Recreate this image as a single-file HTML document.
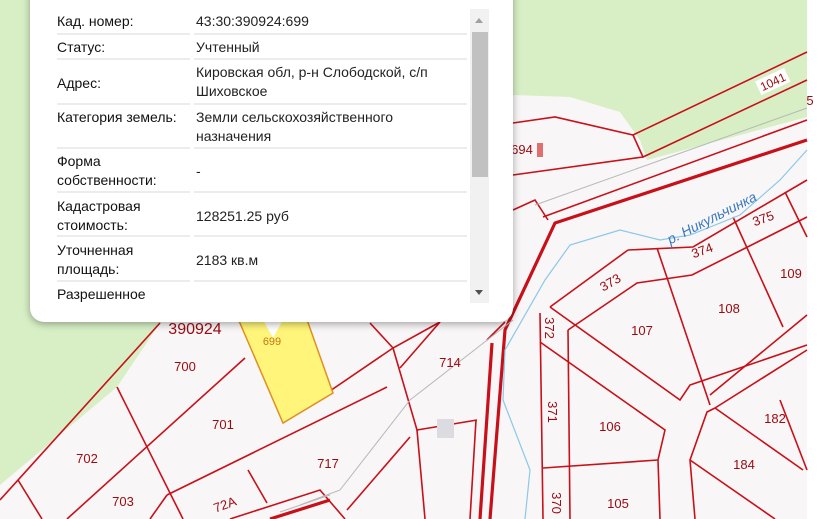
<!DOCTYPE html>
<html><head><meta charset="utf-8"><style>
body{margin:0;width:819px;height:519px;overflow:hidden;position:relative;background:#f8f6f6;font-family:"Liberation Sans",sans-serif}
svg{position:absolute;left:0;top:0}
.pop{position:absolute;left:30px;top:-20px;width:483px;height:342px;background:#fff;border-radius:14px;box-shadow:0 2px 8px rgba(0,0,0,.35)}
.tail{position:absolute;left:262px;top:318px;width:0;height:0;border-left:11px solid transparent;border-right:11px solid transparent;border-top:20px solid #fff}
.r{position:absolute;left:57px;width:410px;font-size:14px;color:#222;line-height:19px}
.l{position:absolute;left:0;width:133px;color:#111}
.v{position:absolute;left:139px;width:271px}
.sep{position:absolute;height:2px;background:#ececec}
.sb{position:absolute;left:470px;top:9px;width:19px;height:294px;background:#f1f1f1}
.th{position:absolute;left:472px;top:32px;width:16px;height:145px;background:#c1c1c1}
.ar{position:absolute;left:475px;width:0;height:0;border-left:4px solid transparent;border-right:4px solid transparent}
</style></head><body>
<svg width="819" height="519" viewBox="0 0 819 519">
<rect x="807" y="0" width="12" height="519" fill="#fff"/>
<polygon points="0,0 200,0 200,300 160,323 117,387 0,485" fill="#d8efc6"/>
<polygon points="513,0 807,0 807,117 647,160 640,140 620,112 570,97 513,95" fill="#d8efc6"/>
<g stroke="#c8101a" stroke-width="1.6" fill="none">
<polyline points="513,123 555,117 633,135 807,52"/>
<polyline points="633,135 643,157 807,80"/>
<line x1="513" y1="175" x2="643" y2="157"/>
<polyline points="548,220 535,200 513,210"/>
<polyline points="543,217 807,120"/>
<polyline points="628,250 693,247 807,180"/>
<polyline points="550,307 628,250"/>
<polyline points="568,330 637,283 692,275 807,217"/>
<polyline points="657,248 710,405"/>
<polyline points="733,217 783,327"/>
<polyline points="785,192 807,237"/>
<polyline points="710,395 807,315"/>
<polyline points="550,307 680,400 690,385 807,345"/>
<polyline points="540,313 543,519"/>
<polyline points="568,330 570,519"/>
<polyline points="540,342 665,430 658,460 660,519"/>
<line x1="543" y1="468" x2="658" y2="460"/>
<polyline points="715,408 707,412 690,460 695,519"/>
<line x1="715" y1="408" x2="807" y2="350"/>
<line x1="715" y1="408" x2="803" y2="470"/>
<line x1="690" y1="460" x2="775" y2="519"/>
<line x1="780" y1="400" x2="807" y2="470"/>
<polyline points="0,500 160,323"/>
<polyline points="117,387 183,519"/>
<polyline points="18,480 42,519"/>
<polyline points="67,519 245,358"/>
<polyline points="167,495 387,387"/>
<polyline points="283,423 393,348 440,322"/>
<polyline points="370,323 393,348"/>
<polyline points="393,348 417,430 477,420"/>
<polyline points="417,430 425,519"/>
<polyline points="410,437 347,510"/>
<polyline points="248,470 267,503"/>
<polyline points="167,495 150,519"/>
<polyline points="230,519 320,490 345,519"/>
<polyline points="440,322 400,368"/>
<polyline points="476,420 470,519"/>
<polyline points="505,322 487,340"/>
</g>
<g stroke="#c8101a" stroke-width="3.2" fill="none">
<polyline points="807,140 555,223 505,330 490,519"/>
<polyline points="492,343 480,519"/>
<polyline points="270,519 330,500"/>
</g>
<g stroke="#b8b8b8" stroke-width="1" fill="none">
<polyline points="535,205 807,108"/>
<polyline points="300,505 340,490 410,400 513,320"/>
<polyline points="280,512 330,495"/>
</g>
<path d="M807,150 L780,180 L740,215 L690,235 L660,240 L620,230 L570,245 L545,280 L505,350 L503,400 L530,470 L525,519" stroke="#8cc8e8" stroke-width="1.2" fill="none"/>
<polygon points="230,300 300,300 333,393 283,423" fill="#fff57a" stroke="#e09020" stroke-width="1.5"/>
<rect x="437" y="419" width="17" height="19" fill="#dcdce0"/>
<rect x="537" y="143" width="6" height="14" fill="#e07070"/>
<g fill="#9a0a10" font-size="13" font-family="Liberation Sans,sans-serif" text-anchor="middle">
<text x="185" y="371">700</text><text x="223" y="429">701</text><text x="87" y="463">702</text>
<text x="123" y="506">703</text><text x="450" y="367">714</text><text x="328" y="468">717</text>
<text x="225" y="509" transform="rotate(-20 225 505)">72A</text>
<text x="642" y="335">107</text><text x="729" y="313">108</text><text x="791" y="278">109</text>
<text x="610" y="287" transform="rotate(-30 610 282)">373</text>
<text x="702" y="255" transform="rotate(-20 702 250)">374</text>
<text x="763" y="223" transform="rotate(-20 763 218)">375</text>
<text x="550" y="333" transform="rotate(90 550 328)">372</text>
<text x="553" y="417" transform="rotate(90 553 412)">371</text>
<text x="557" y="508" transform="rotate(90 557 503)">370</text>
<text x="610" y="431">106</text><text x="618" y="508">105</text>
<text x="775" y="423">182</text><text x="744" y="469">184</text>
<text x="522" y="154">694</text><text x="810" y="105">5</text>
<text x="195" y="334" font-size="16">390924</text>
<text x="272" y="345" fill="#c07a10" font-size="11">699</text>
</g>
<g transform="rotate(-25 773 82)"><rect x="757" y="74" width="32" height="15" fill="#fff"/><text x="773" y="86" fill="#9a0a10" font-size="12" text-anchor="middle" font-family="Liberation Sans,sans-serif">1041</text></g>
<text x="668" y="245" transform="rotate(-27 668 240)" fill="#3a78c0" font-size="14" font-style="italic" font-family="Liberation Sans,sans-serif">р. Никульчинка</text>
</svg>
<div class="tail"></div>
<div class="pop"></div>
<div class="sep" style="left:57px;top:33px;width:133px"></div><div class="sep" style="left:194px;top:33px;width:273px"></div>
<div class="sep" style="left:57px;top:58px;width:133px"></div><div class="sep" style="left:194px;top:58px;width:273px"></div>
<div class="sep" style="left:57px;top:103px;width:133px"></div><div class="sep" style="left:194px;top:103px;width:273px"></div>
<div class="sep" style="left:57px;top:147px;width:133px"></div><div class="sep" style="left:194px;top:147px;width:273px"></div>
<div class="sep" style="left:57px;top:191px;width:133px"></div><div class="sep" style="left:194px;top:191px;width:273px"></div>
<div class="sep" style="left:57px;top:235px;width:133px"></div><div class="sep" style="left:194px;top:235px;width:273px"></div>
<div class="sep" style="left:57px;top:280px;width:133px"></div><div class="sep" style="left:194px;top:280px;width:273px"></div>
<div class="r" style="top:12px"><div class="l">Кад. номер:</div><div class="v">43:30:390924:699</div></div>
<div class="r" style="top:38px"><div class="l">Статус:</div><div class="v">Учтенный</div></div>
<div class="r" style="top:63px"><div class="l" style="top:11px">Адрес:</div><div class="v">Кировская обл, р-н Слободской, с/п Шиховское</div></div>
<div class="r" style="top:108px"><div class="l">Категория земель:</div><div class="v">Земли сельскохозяйственного назначения</div></div>
<div class="r" style="top:152px"><div class="l">Форма собственности:</div><div class="v" style="top:10px">-</div></div>
<div class="r" style="top:197px"><div class="l">Кадастровая стоимость:</div><div class="v" style="top:10px">128251.25 руб</div></div>
<div class="r" style="top:241px"><div class="l">Уточненная площадь:</div><div class="v" style="top:10px">2183 кв.м</div></div>
<div class="r" style="top:285px"><div class="l">Разрешенное</div></div>
<div class="sb"></div><div class="th"></div>
<div class="ar" style="top:18px;border-bottom:5px solid #a0a0a0"></div>
<div class="ar" style="top:290px;border-top:5px solid #505050"></div>
</body></html>
